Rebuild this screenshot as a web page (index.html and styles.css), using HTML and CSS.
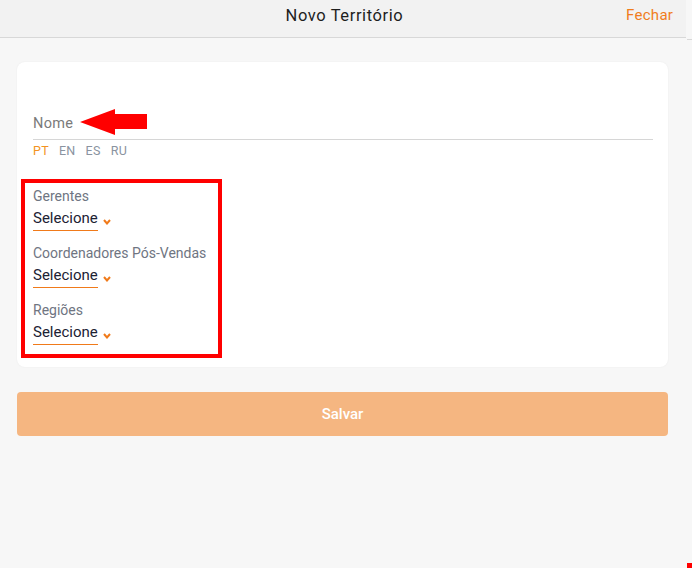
FILE: index.html
```html
<!DOCTYPE html>
<html lang="pt">
<head>
<meta charset="utf-8">
<title>Novo Território</title>
<link rel="stylesheet" href="styles.css">
</head>
<body>
<header class="topbar">
  <div class="topbar-spacer"></div>
  <h1 class="topbar-title">Novo Território</h1>
  <a class="topbar-close">Fechar</a>
</header>
<div class="topbar-tail"></div>
<main class="content">
  <section class="card">
    <div class="field-name">
      <div class="name-row">
        <span class="name-label">Nome</span>
        <svg class="arrow" width="68" height="26" viewBox="0 0 68 26">
          <path d="M0 13 L35 0 L35 5 L67 5 L67 20 L35 20 L35 26 Z" fill="#ff0000"/>
        </svg>
      </div>
      <div class="langs">
        <span class="lang active">PT</span>
        <span class="lang">EN</span>
        <span class="lang">ES</span>
        <span class="lang">RU</span>
      </div>
    </div>
    <div class="highlight">
      <div class="select-field">
        <div class="select-label">Gerentes</div>
        <div class="select-row"><span class="select-value">Selecione</span><span class="chev"><svg width="8" height="6" viewBox="0 0 8 6"><path d="M1 1 L4 4.5 L7 1" fill="none" stroke="#f07a1a" stroke-width="2"/></svg></span></div>
      </div>
      <div class="select-field">
        <div class="select-label">Coordenadores Pós-Vendas</div>
        <div class="select-row"><span class="select-value">Selecione</span><span class="chev"><svg width="8" height="6" viewBox="0 0 8 6"><path d="M1 1 L4 4.5 L7 1" fill="none" stroke="#f07a1a" stroke-width="2"/></svg></span></div>
      </div>
      <div class="select-field">
        <div class="select-label">Regiões</div>
        <div class="select-row"><span class="select-value">Selecione</span><span class="chev"><svg width="8" height="6" viewBox="0 0 8 6"><path d="M1 1 L4 4.5 L7 1" fill="none" stroke="#f07a1a" stroke-width="2"/></svg></span></div>
      </div>
    </div>
  </section>
  <button class="save">Salvar</button>
</main>
<div class="corner-mark"></div>
</body>
</html>
```
FILE: styles.css
```css
html, body {
  margin: 0;
  padding: 0;
  height: 100%;
}
body {
  background: #f7f7f7;
  font-family: "Roboto", "Liberation Sans", sans-serif;
  position: relative;
  overflow: hidden;
}
.topbar {
  height: 37px;
  width: 686px;
  background: #f2f2f2;
  border-bottom: 1px solid #d8d8d8;
  display: flex;
  align-items: center;
}
.topbar-spacer {
  width: 60px;
}
.topbar-title {
  flex: 1;
  text-align: center;
  margin: 0 0 0 3px;
  font-size: 16.5px;
  font-weight: 400;
  color: #1e1e1e;
  letter-spacing: 0.6px;
  padding-bottom: 6px;
}
.topbar-close {
  width: 47px;
  color: #f07d1c;
  font-size: 15px;
  letter-spacing: 0.3px;
  margin-right: 13px;
  padding-bottom: 7px;
}
.topbar-tail {
  position: absolute;
  top: 39px;
  left: 687px;
  width: 5px;
  height: 1px;
  background: #d8d8d8;
}
.content {
  padding: 24px 24px 0 17px;
}
.card {
  background: #fff;
  border-radius: 8px;
  box-shadow: 0 0 2px rgba(0,0,0,0.06);
  padding: 46px 15px 10px 16px;
  height: 249px;
}
.field-name {
  display: flex;
  flex-direction: column;
}
.name-row {
  display: flex;
  align-items: center;
  border-bottom: 1px solid #d6d6d6;
  height: 31px;
}
.name-label {
  font-size: 14.5px;
  color: #7a7a7a;
  margin-top: -1px;
  letter-spacing: 0.3px;
}
.arrow {
  margin-left: 7px;
  margin-top: -3px;
}
.langs {
  display: flex;
  gap: 10px;
  margin-top: 3px;
  font-size: 12.5px;
  letter-spacing: 0.3px;
  color: #8a93a0;
}
.lang.active {
  color: #f39322;
}
.highlight {
  margin-top: 21px;
  margin-left: -12px;
  width: 185px;
  border: 4px solid #ff0000;
  padding: 4px 0 9px 8px;
  display: flex;
  flex-direction: column;
  gap: 13px;
}
.select-label {
  font-size: 14px;
  color: #6f7582;
  line-height: 18px;
}
.select-row {
  display: flex;
  align-items: flex-end;
  margin-top: 4px;
}
.select-value {
  font-size: 15px;
  color: #1c2233;
  line-height: 18px;
  border-bottom: 1.5px solid #f07a1a;
  padding-bottom: 3px;
}
.chev {
  margin-left: 5px;
  margin-bottom: 6px;
  display: flex;
}
.save {
  display: block;
  width: 651px;
  height: 44px;
  margin-top: 25px;
  border: none;
  border-radius: 4px;
  background: #f5b681;
  color: #fff;
  font-family: "Roboto", "Liberation Sans", sans-serif;
  font-size: 15px;
  font-weight: 500;
}
.corner-mark {
  position: absolute;
  right: 0;
  bottom: 0;
  width: 5px;
  height: 5px;
  background: #ff0000;
}
```
